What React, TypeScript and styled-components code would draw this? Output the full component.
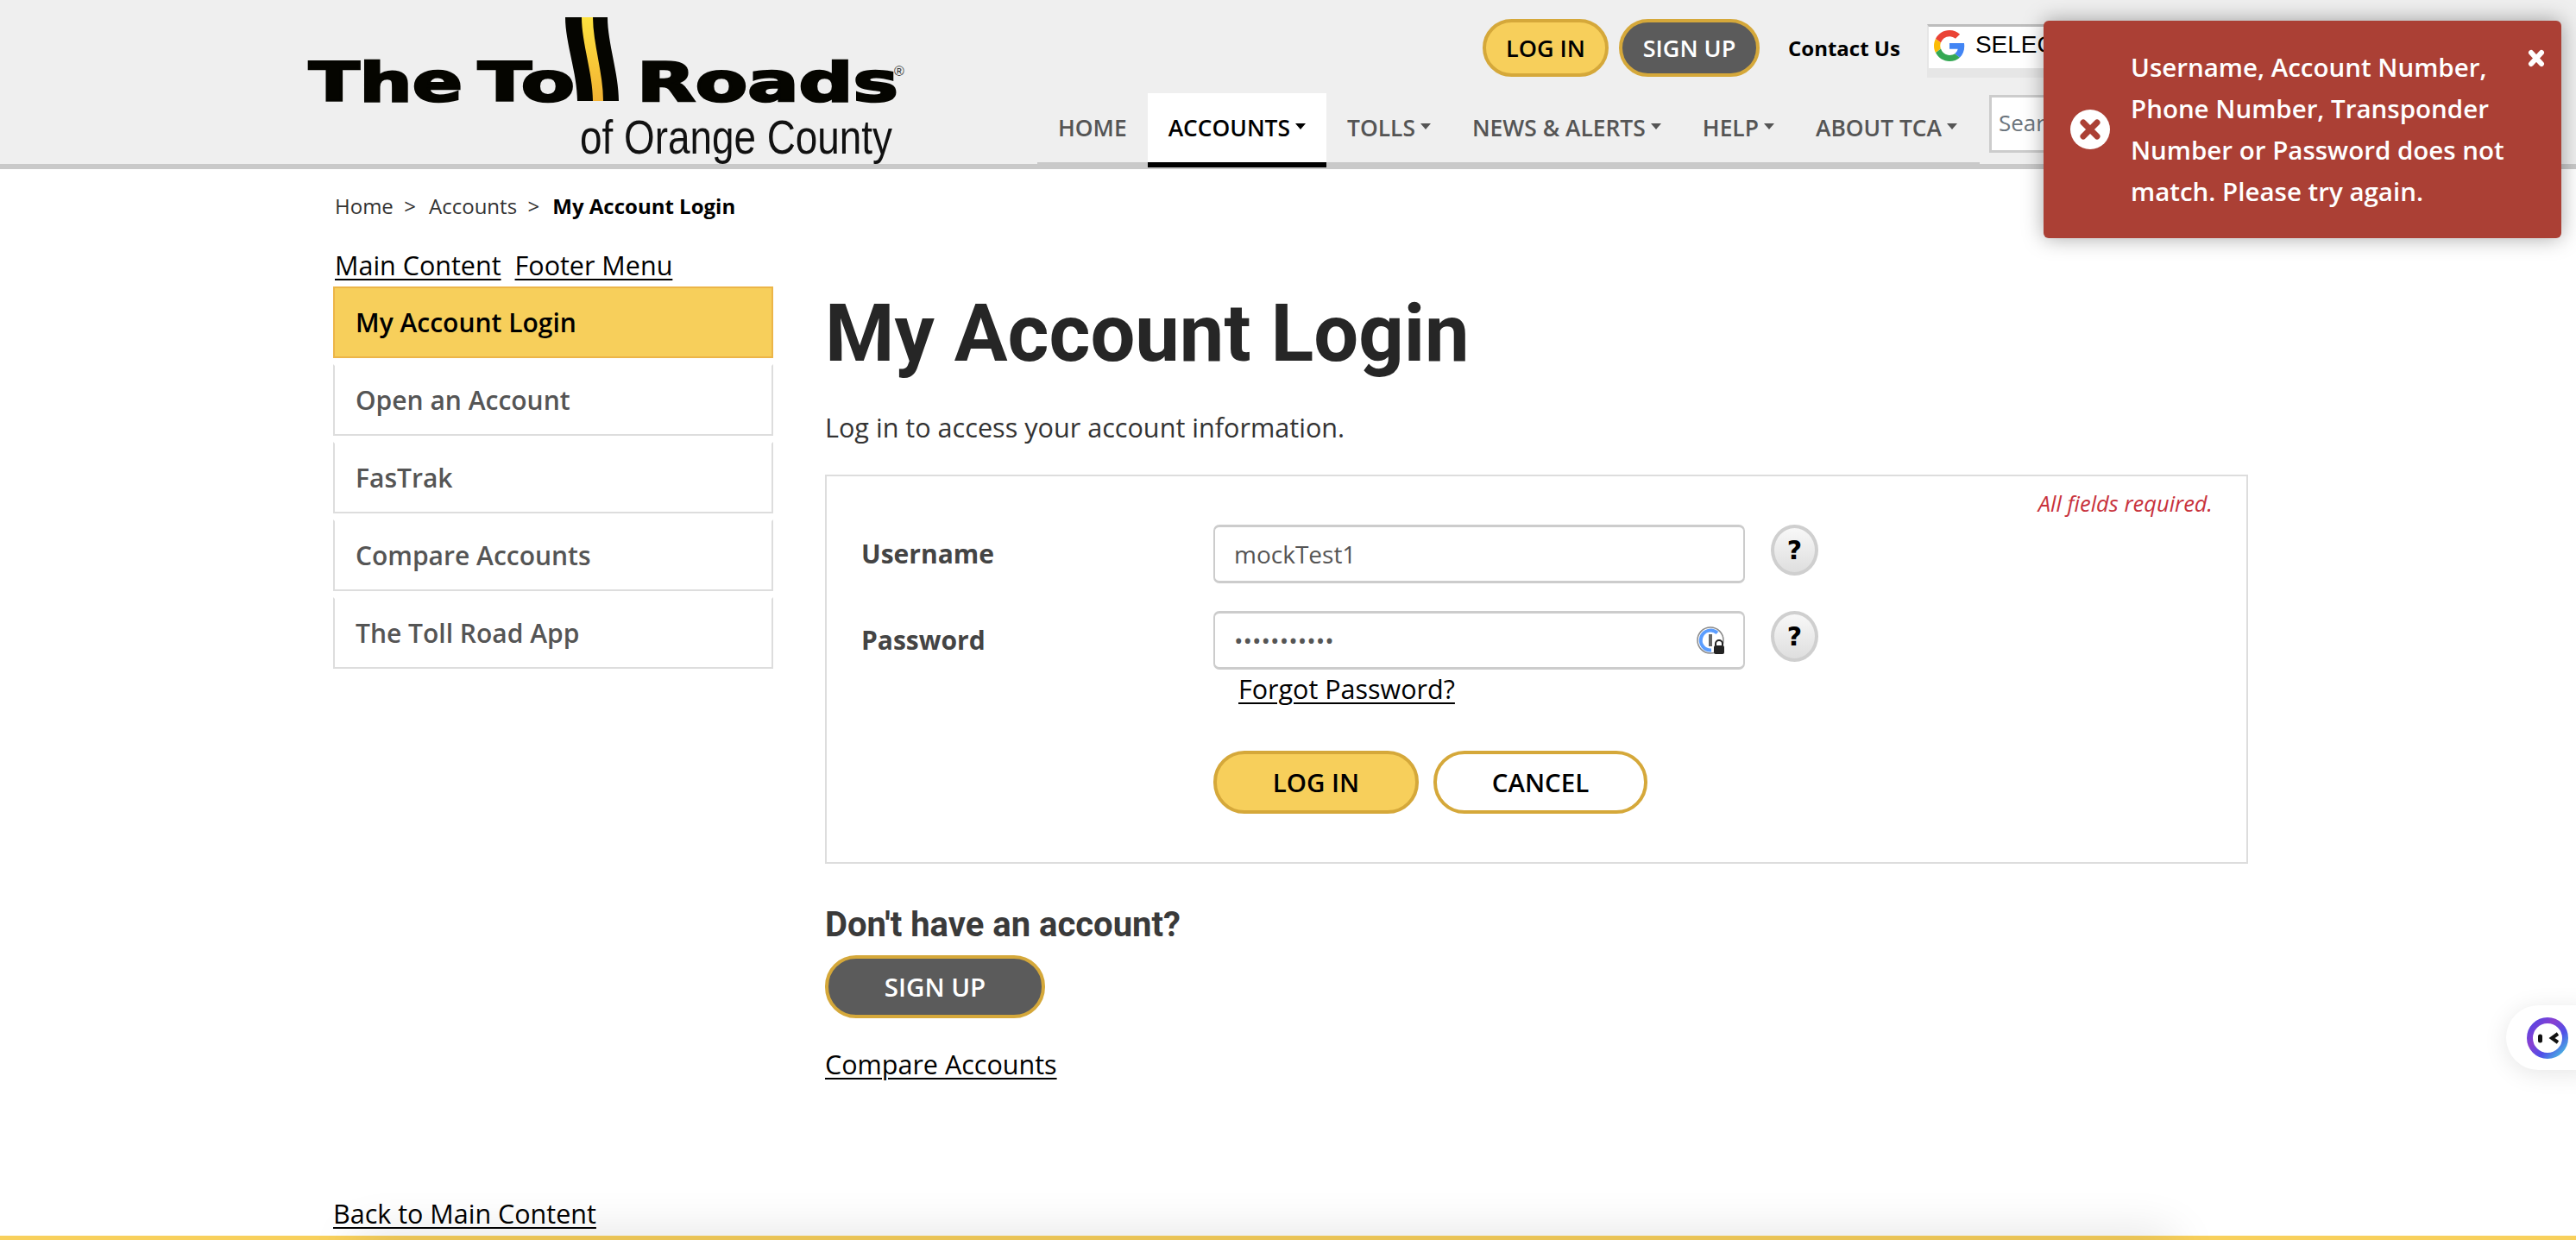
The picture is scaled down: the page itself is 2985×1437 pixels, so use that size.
import React from 'react';
import styled, { createGlobalStyle } from 'styled-components';

const GlobalStyle = createGlobalStyle`
  html, body {
    margin: 0;
    padding: 0;
    height: 100%;
    overflow: hidden;
    background: #fff;
    font-family: "Open Sans", "Liberation Sans", sans-serif;
  }
`;

const Page = styled.div`
  position: relative;
  display: flex;
  flex-direction: column;
  width: 2985px;
  height: 1437px;
  overflow: hidden;
`;

const Header = styled.header`
  display: flex;
  flex: none;
  box-sizing: content-box;
  height: 190px;
  padding-left: 355px;
  background: #efefef;
  border-bottom: 6px solid #c9c9c9;
`;

const LogoSvg = styled.svg`
  flex: none;
  width: 700px;
  height: 190px;
  overflow: visible;
`;

const HeaderRight = styled.div`
  display: flex;
  flex-direction: column;
  margin-left: 147px;
  height: 194px;
`;

const TopRow = styled.div`
  display: flex;
  align-items: flex-start;
  height: 86px;
  padding: 22px 0 0 516px;
  box-sizing: border-box;
`;

const Pill = styled.a<{ $dark?: boolean; $w: number; $h: number; $outline?: boolean }>`
  display: flex;
  align-items: center;
  justify-content: center;
  box-sizing: border-box;
  flex: none;
  width: ${p => p.$w}px;
  height: ${p => p.$h}px;
  border: 4px solid #d5a83a;
  border-radius: 36px;
  font-weight: 600;
  font-size: ${p => (p.$h > 70 ? 29.5 : 27)}px;
  color: ${p => (p.$dark ? '#fff' : '#000')};
  background: ${p => (p.$dark ? '#5b5b5b' : p.$outline ? '#fff' : '#f7cf5b')};
`;

const HeaderSignUp = styled(Pill)`
  margin-left: 12px;
`;

const ContactLink = styled.a`
  margin: 20px 0 0 33px;
  font-size: 24px;
  font-weight: 700;
  line-height: 28px;
  color: #000;
`;

const TranslateBox = styled.div`
  display: flex;
  align-items: flex-start;
  box-sizing: border-box;
  flex: none;
  width: 340px;
  height: 62px;
  margin: 6px 0 0 31px;
  background: linear-gradient(#fff 0 48px, #e6e6e6 48px);
  border-top: 3px solid #bdbdbd;
  border-left: 2px solid #e6e6e6;
  font-family: "Liberation Sans", Arial, sans-serif;
  font-size: 28px;
  line-height: 42px;
  color: #000;
  white-space: nowrap;
  svg {
    width: 36px;
    height: 36px;
    margin: 4px 12px 0 6px;
  }
`;

const NavRow = styled.nav`
  display: flex;
  align-items: flex-start;
  height: 108px;
  padding-top: 22px;
  box-sizing: border-box;
`;

const NavList = styled.ul`
  display: flex;
  height: 86px;
  box-sizing: border-box;
  width: 1092px;
  margin: 0;
  padding: 0;
  list-style: none;
  border-bottom: 6px solid #c9c9c9;
`;

const NavItem = styled.li<{ $active?: boolean }>`
  display: flex;
  align-items: center;
  flex: none;
  box-sizing: border-box;
  height: 86px;
  padding: 0 24px ${p => (p.$active ? 0 : 6)}px;
  font-size: 26.4px;
  font-weight: 600;
  color: ${p => (p.$active ? '#000' : '#555')};
  background: ${p => (p.$active ? '#fff' : 'transparent')};
  border-bottom: ${p => (p.$active ? '6px solid #000' : '0')};
`;

const Caret = styled.span`
  display: inline-block;
  margin-left: 6px;
  border-top: 7px solid currentColor;
  border-left: 6px solid transparent;
  border-right: 6px solid transparent;
  transform: translateY(-2px);
`;

const SearchBox = styled.div`
  flex: none;
  box-sizing: border-box;
  width: 320px;
  height: 67px;
  margin: 2px 0 0 11px;
  padding-left: 8px;
  background: #fff;
  border: 3px solid #ccc;
  font-size: 26px;
  line-height: 58px;
  color: #6c757d;
`;

const Toast = styled.div`
  position: absolute;
  top: 24px;
  left: 2368px;
  display: flex;
  box-sizing: border-box;
  width: 600px;
  height: 252px;
  padding: 30px 0 0 101px;
  background: #ab4035;
  border-radius: 6px;
  box-shadow: 0 0 24px rgba(0, 0, 0, 0.35);
  color: #fff;
  font-size: 29.5px;
  font-weight: 600;
  line-height: 48px;
`;

const ToastIcon = styled.svg`
  position: absolute;
  top: 103px;
  left: 31px;
  width: 46px;
  height: 46px;
`;

const ToastClose = styled.svg`
  position: absolute;
  top: 33px;
  left: 561px;
  width: 20px;
  height: 21px;
`;

const Breadcrumb = styled.div`
  display: flex;
  flex: none;
  height: 48px;
  margin: 19px 0 0 388px;
  font-size: 24px;
  line-height: 48px;
  color: #333;
`;

const Crumb = styled.span<{ $current?: boolean }>`
  margin-right: 15px;
  font-weight: ${p => (p.$current ? 700 : 400)};
  color: ${p => (p.$current ? '#000' : '#333')};
  white-space: pre;
`;

const Columns = styled.div`
  display: flex;
  flex: 1;
  padding-left: 386px;
`;

const Sidebar = styled.aside`
  flex: none;
  width: 510px;
`;

const SkipLinks = styled.div`
  display: flex;
  gap: 16px;
  height: 69px;
  padding: 24px 0 0 2px;
  box-sizing: border-box;
  font-size: 30.5px;
  line-height: 41px;
`;

const TextLink = styled.a`
  color: #000;
  text-decoration: underline;
  text-decoration-thickness: 2px;
  text-underline-offset: 4px;
`;

const SideMenu = styled.ul`
  margin: 0;
  padding: 0;
  list-style: none;
`;

const SideItem = styled.li<{ $active?: boolean }>`
  display: flex;
  align-items: center;
  box-sizing: border-box;
  height: 83px;
  margin-bottom: 7px;
  padding-left: 24px;
  font-size: 30px;
  font-weight: 600;
  color: ${p => (p.$active ? '#000' : '#555')};
  background: ${p => (p.$active ? '#f7cf5b' : '#fff')};
  border: 2px solid ${p => (p.$active ? '#ecb548' : '#ddd')};
  border-top-color: ${p => (p.$active ? '#ecb548' : 'transparent')};
`;

const Content = styled.main`
  flex: none;
  width: 1649px;
  margin-left: 60px;
`;

const Title = styled.h1`
  margin: 0;
  padding-top: 68px;
  font-family: Roboto, sans-serif;
  font-size: 92px;
  font-weight: 700;
  line-height: 112px;
  color: #262626;
`;

const Intro = styled.p`
  margin: 32px 0 0;
  font-size: 30.6px;
  line-height: 41px;
  color: #333;
`;

const FormBox = styled.form`
  position: relative;
  box-sizing: border-box;
  height: 451px;
  margin-top: 34px;
  padding: 56px 0 0 40px;
  border: 2px solid #ddd;
`;

const RequiredNote = styled.span`
  position: absolute;
  top: 16px;
  right: 39px;
  font-size: 25.5px;
  font-style: italic;
  line-height: 30px;
  color: #c8323c;
`;

const FieldRow = styled.div`
  display: flex;
  align-items: flex-start;
  height: 100px;
`;

const FieldLabel = styled.label`
  flex: none;
  width: 408px;
  font-size: 30px;
  font-weight: 700;
  line-height: 68px;
  color: #444;
`;

const InputWrap = styled.div`
  position: relative;
  flex: none;
  width: 616px;
  height: 68px;
`;

const TextInput = styled.input`
  box-sizing: border-box;
  width: 100%;
  height: 100%;
  padding: 0 22px;
  background: #fff;
  border: 2px solid #ccc;
  border-top-width: 3px;
  border-bottom-width: 3px;
  border-radius: 7px;
  font-family: "Open Sans", sans-serif;
  font-size: 28px;
  color: #555;
  outline: none;
`;

const KeyIcon = styled.svg`
  position: absolute;
  top: 18px;
  left: 560px;
  width: 32px;
  height: 32px;
`;

const HelpButton = styled.button`
  flex: none;
  box-sizing: border-box;
  width: 55px;
  height: 59px;
  margin-left: 30px;
  padding: 0;
  background: linear-gradient(#f8f8f8, #dedede);
  border: 4px solid #cfcfcf;
  border-radius: 50%;
  font-family: "DejaVu Sans", sans-serif;
  font-size: 30px;
  font-weight: 700;
  color: #000;
`;

const ForgotRow = styled.div`
  height: 92px;
  margin: -30px 0 0 437px;
  font-size: 30.5px;
  line-height: 41px;
`;

const ActionRow = styled.div`
  display: flex;
  gap: 17px;
  margin-left: 408px;
`;

const SubHeading = styled.h2`
  margin: 44px 0 0;
  font-family: Roboto, sans-serif;
  font-size: 40px;
  font-weight: 700;
  line-height: 54px;
  color: #3a3a3a;
`;

const SignUpRow = styled.div`
  margin-top: 8px;
`;

const CompareRow = styled.div`
  margin-top: 33px;
  font-size: 30.5px;
  line-height: 41px;
`;

const Footer = styled.footer`
  position: relative;
  flex: none;
  height: 58px;
  padding: 7px 0 0 386px;
  box-sizing: border-box;
  font-size: 30.5px;
  line-height: 41px;
  border-bottom: 5px solid #f8d05c;

  &::before {
    content: '';
    position: absolute;
    top: 62px;
    left: 420px;
    width: 2090px;
    height: 20px;
    box-shadow: 0 0 56px 8px rgba(0, 0, 0, 0.14);
  }
`;

const ChatBubble = styled.div`
  position: absolute;
  top: 1165px;
  left: 2904px;
  display: flex;
  align-items: center;
  box-sizing: border-box;
  width: 100px;
  height: 75px;
  padding-left: 24px;
  background: #fff;
  border-radius: 38px 0 0 38px;
  box-shadow: 0 4px 28px rgba(0, 0, 0, 0.1);
  svg {
    width: 48px;
    height: 48px;
  }
`;

const navItems = [
  { label: 'HOME' },
  { label: 'ACCOUNTS', active: true, caret: true },
  { label: 'TOLLS', caret: true },
  { label: 'NEWS & ALERTS', caret: true },
  { label: 'HELP', caret: true },
  { label: 'ABOUT TCA', caret: true },
];

const sideItems = ['My Account Login', 'Open an Account', 'FasTrak', 'Compare Accounts', 'The Toll Road App'];

const Logo = () => (
  <LogoSvg viewBox="355 0 700 190">
    <g fontFamily="'DejaVu Sans', sans-serif" fontWeight="700" fontSize="62" fill="#050500" stroke="#050500" strokeWidth="2.5">
      <text x="358" y="117" textLength="178" lengthAdjust="spacingAndGlyphs">The</text>
      <text x="554" y="117" textLength="112" lengthAdjust="spacingAndGlyphs">To</text>
      <text x="738" y="117" textLength="303" lengthAdjust="spacingAndGlyphs">Roads</text>
    </g>
    <path d="M655 20 H704 C704 50 717 85 717 117 H669 C669 85 655 50 655 20 Z" fill="#050500" />
    <path d="M674 20 H687 C687 50 699 85 699 117 H687 C687 85 674 50 674 20 Z" fill="url(#roadLine)" />
    <defs>
      <linearGradient id="roadLine" x1="0" y1="0" x2="0" y2="1">
        <stop offset="0" stopColor="#fde23f" />
        <stop offset="1" stopColor="#f2b233" />
      </linearGradient>
    </defs>
    <text x="1036" y="88" fontFamily="'Liberation Sans', sans-serif" fontSize="16" fill="#333">®</text>
    <text x="672" y="178" fontFamily="'Liberation Sans', sans-serif" fontSize="55" fill="#111" textLength="362" lengthAdjust="spacingAndGlyphs">
      of Orange County
    </text>
  </LogoSvg>
);

const GoogleG = () => (
  <svg viewBox="0 0 48 48">
    <path fill="#EA4335" d="M24 9.5c3.5 0 6.7 1.2 9.2 3.600l6.900-6.900C35.900 2.400 30.400 0 24 0 14.600 0 6.500 5.400 2.600 13.200l8 6.200C12.500 13.700 17.800 9.500 24 9.500z" />
    <path fill="#4285F4" d="M47 24.500c0-1.600-.1-3.100-.4-4.500H24v9h12.900c-.6 3-2.300 5.500-4.800 7.200l7.700 6C44.300 38 47 31.800 47 24.500z" />
    <path fill="#FBBC05" d="M10.500 28.600c-.5-1.400-.8-3-.8-4.600s.3-3.200.8-4.600l-8-6.200C.9 16.500 0 20.100 0 24s.9 7.500 2.600 10.800l7.900-6.200z" />
    <path fill="#34A853" d="M24 48c6.500 0 11.900-2.100 15.900-5.800l-7.700-6c-2.200 1.500-4.900 2.300-8.100 2.300-6.200 0-11.500-4.200-13.400-9.900l-8 6.200C6.500 42.600 14.600 48 24 48z" />
  </svg>
);

const PasswordKey = () => (
  <KeyIcon viewBox="0 0 32 32">
    <circle cx="16" cy="16" r="15" fill="#fff" stroke="#8a8a8a" strokeWidth="1.5" />
    <path d="M24 7.500 A11.500 11.500 0 1 0 17 27.500" fill="none" stroke="#5b9dff" strokeWidth="4" />
    <rect x="14" y="9" width="4" height="14" fill="#666" />
    <path d="M22 22 v-2 a4 4 0 0 1 8 0 v2" fill="none" stroke="#222" strokeWidth="2" />
    <rect x="20" y="22" width="12" height="10" rx="2" fill="#222" />
  </KeyIcon>
);

const BotMark = () => (
  <svg viewBox="0 0 48 48">
    <defs>
      <linearGradient id="botRing" x1="0" y1="0" x2="1" y2="1">
        <stop offset="0" stopColor="#4f46e5" />
        <stop offset="0.35" stopColor="#8a3fd1" />
        <stop offset="0.65" stopColor="#4f4fe8" />
        <stop offset="1" stopColor="#48c8e0" />
      </linearGradient>
    </defs>
    <circle cx="24" cy="24" r="20.500" fill="#fff" stroke="url(#botRing)" strokeWidth="7" />
    <rect x="13" y="19.500" width="5" height="10" rx="2.500" fill="#111" />
    <path d="M36 19 L29 24 L36 29" fill="none" stroke="#111" strokeWidth="4" />
  </svg>
);

export default function App() {
  return (
    <Page>
      <GlobalStyle />
      <Header>
        <Logo />
        <HeaderRight>
          <TopRow>
            <Pill $w={146} $h={67}>LOG IN</Pill>
            <HeaderSignUp $dark $w={163} $h={67}>SIGN UP</HeaderSignUp>
            <ContactLink>Contact Us</ContactLink>
            <TranslateBox>
              <GoogleG />
              SELECT LANGUAGE
            </TranslateBox>
          </TopRow>
          <NavRow>
            <NavList>
              {navItems.map(item => (
                <NavItem key={item.label} $active={item.active}>
                  {item.label}
                  {item.caret && <Caret />}
                </NavItem>
              ))}
            </NavList>
            <SearchBox>Search</SearchBox>
          </NavRow>
        </HeaderRight>
      </Header>

      <Breadcrumb>
        <Crumb>Home  &gt;</Crumb>
        <Crumb>Accounts  &gt;</Crumb>
        <Crumb $current>My Account Login</Crumb>
      </Breadcrumb>

      <Columns>
        <Sidebar>
          <SkipLinks>
            <TextLink>Main Content</TextLink>
            <TextLink>Footer Menu</TextLink>
          </SkipLinks>
          <SideMenu>
            {sideItems.map((label, i) => (
              <SideItem key={label} $active={i === 0}>{label}</SideItem>
            ))}
          </SideMenu>
        </Sidebar>
        <Content>
          <Title>My Account Login</Title>
          <Intro>Log in to access your account information.</Intro>
          <FormBox>
            <RequiredNote>All fields required.</RequiredNote>
            <FieldRow>
              <FieldLabel>Username</FieldLabel>
              <InputWrap>
                <TextInput type="text" defaultValue="mockTest1" readOnly />
              </InputWrap>
              <HelpButton type="button">?</HelpButton>
            </FieldRow>
            <FieldRow>
              <FieldLabel>Password</FieldLabel>
              <InputWrap>
                <TextInput type="password" defaultValue="mockTest123" readOnly />
                <PasswordKey />
              </InputWrap>
              <HelpButton type="button">?</HelpButton>
            </FieldRow>
            <ForgotRow>
              <TextLink>Forgot Password?</TextLink>
            </ForgotRow>
            <ActionRow>
              <Pill $w={238} $h={73}>LOG IN</Pill>
              <Pill $outline $w={248} $h={73}>CANCEL</Pill>
            </ActionRow>
          </FormBox>
          <SubHeading>Don't have an account?</SubHeading>
          <SignUpRow>
            <Pill $dark $w={255} $h={73}>SIGN UP</Pill>
          </SignUpRow>
          <CompareRow>
            <TextLink>Compare Accounts</TextLink>
          </CompareRow>
        </Content>
      </Columns>

      <Footer>
        <TextLink>Back to Main Content</TextLink>
      </Footer>

      <Toast>
        <ToastIcon viewBox="0 0 46 46">
          <circle cx="23" cy="23" r="23" fill="#fff" />
          <path d="M15 15 L31 31 M31 15 L15 31" stroke="#ab4035" strokeWidth="7" strokeLinecap="round" />
        </ToastIcon>
        <div>
          Username, Account Number,<br />
          Phone Number, Transponder<br />
          Number or Password does not<br />
          match. Please try again.
        </div>
        <ToastClose viewBox="0 0 20 21">
          <path d="M4 4 L16 17 M16 4 L4 17" stroke="#fff" strokeWidth="6" strokeLinecap="round" />
        </ToastClose>
      </Toast>

      <ChatBubble>
        <BotMark />
      </ChatBubble>
    </Page>
  );
}
